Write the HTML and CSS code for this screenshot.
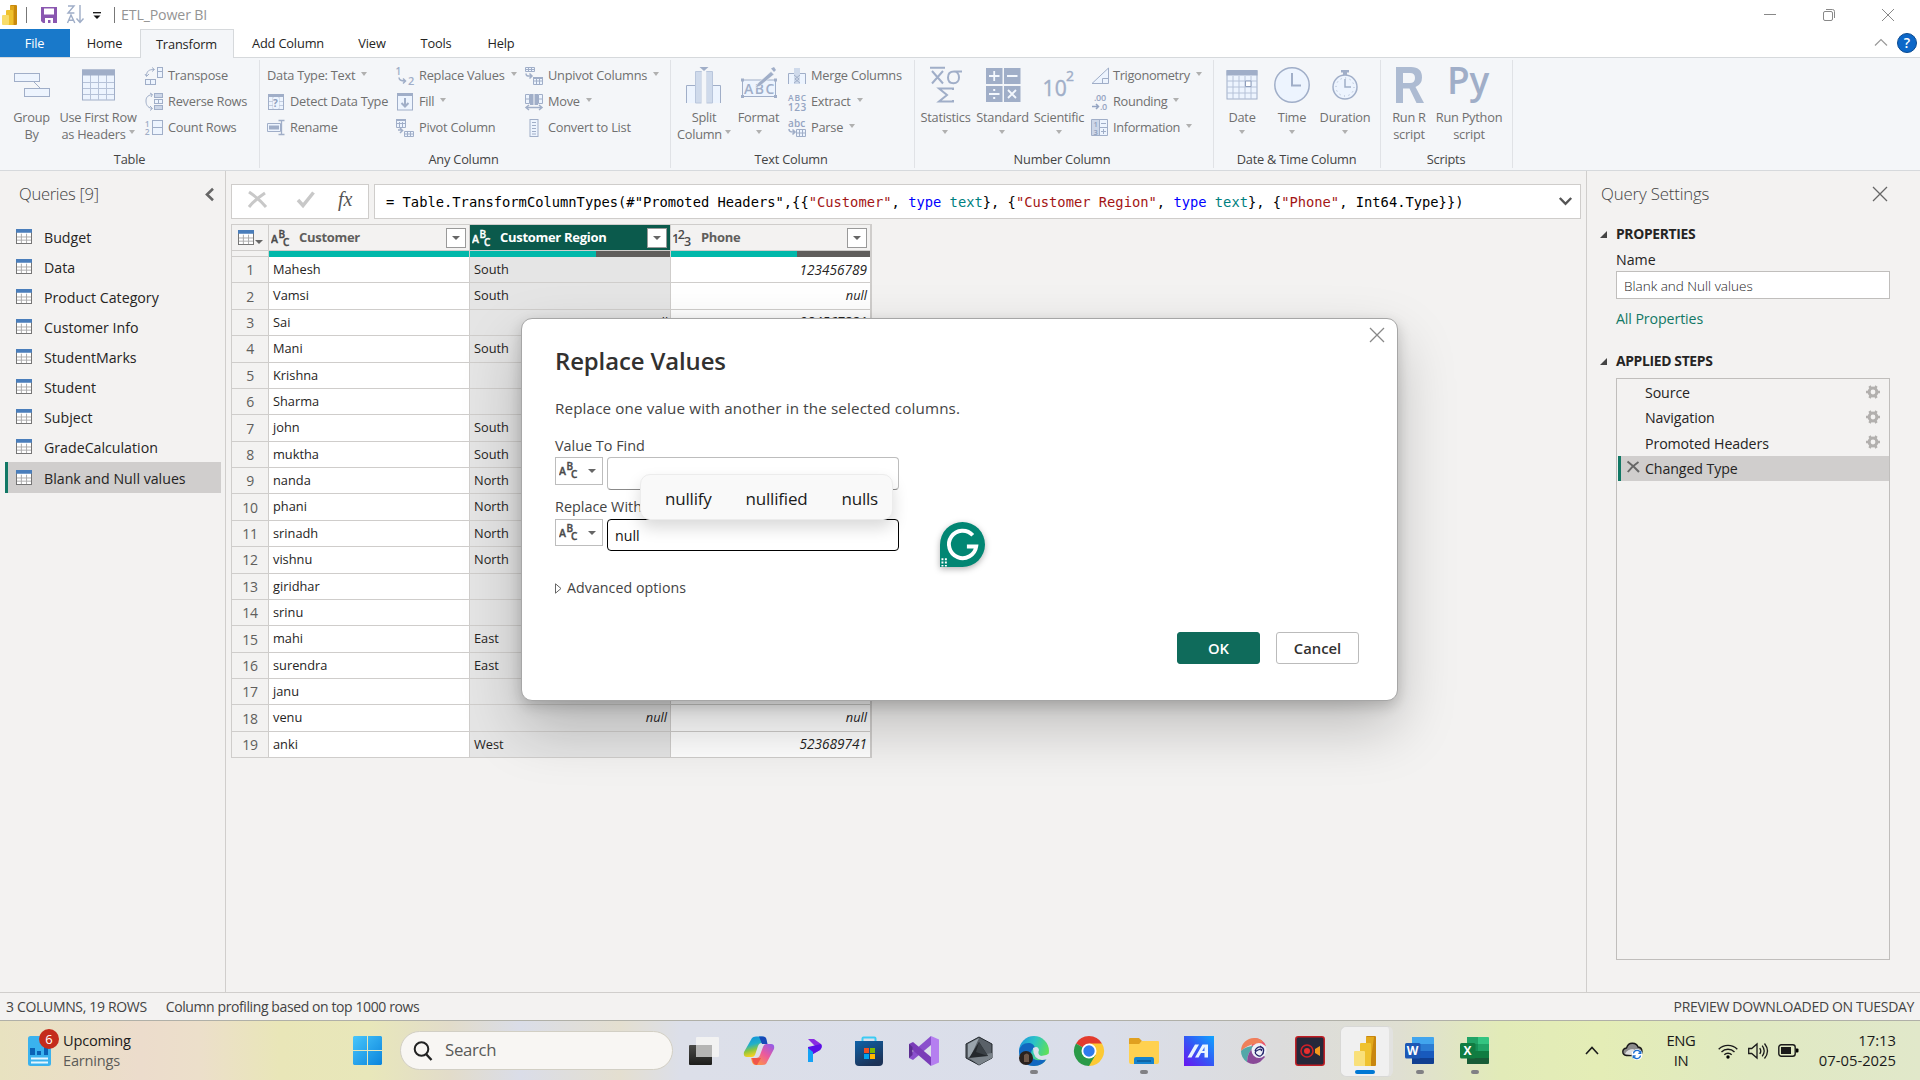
FILE: index.html
```html
<!DOCTYPE html>
<html lang="en">
<head>
<meta charset="utf-8">
<title>ETL_Power BI</title>
<link rel="stylesheet" href="styles.css">
</head>
<body>
<svg class="defs" aria-hidden="true">
  <symbol id="abc" viewBox="0 0 19 18"><g fill="currentColor" stroke="currentColor" stroke-width=".35" font-family="Open Sans, sans-serif" font-weight="600"><text x="0" y="13.6" font-size="10.5">A</text><text x="7.4" y="9.3" font-size="10">B</text><text x="12" y="17.4" font-size="10">C</text></g></symbol>
  <symbol id="n123" viewBox="0 0 19 18"><g fill="currentColor" font-family="Open Sans, sans-serif" font-weight="600"><text x="-1" y="13.8" font-size="12.5">1</text><text x="4.8" y="9.8" font-size="12.5">2</text><text x="11" y="17.3" font-size="12.5">3</text></g></symbol>
  <symbol id="tbl" viewBox="0 0 17 16"><rect x=".5" y="1" width="16" height="14.5" fill="#fff" stroke="#6e6e6e"/><path d="M1 8.5h15M1 11.9h15M5.7 5v10M11.2 5v10" stroke="#a9a9a9"/><rect width="17" height="4" fill="#4a7ebb"/></symbol>
  <symbol id="gear" viewBox="0 0 14 14"><circle cx="7" cy="7" r="3.9" fill="none" stroke="#b2b0ae" stroke-width="3"/><path d="M0 7h2.4M11.6 7H14M3.5 1l1.2 2M10.5 1L9.3 3M3.5 13l1.2-2M10.5 13l-1.2-2" stroke="#b2b0ae" stroke-width="2.6"/></symbol>
</svg>

<header class="titlebar">
  <svg class="pbi-logo" viewBox="0 0 16 20"><rect x="8" width="7" height="20" rx="1" fill="#c98a0c"/><path d="M8 1h4v19H8z" fill="#e0a51c"/><rect x="4" y="5" width="7" height="15" rx="1" fill="#efc12d"/><rect x="0" y="10" width="7" height="10" rx="1" fill="#f8dc6a"/></svg>
  <i class="vbar"></i>
  <svg class="save" viewBox="0 0 16 16"><path d="M0 0h16v16H2l-2-2z" fill="#8a57b0"/><path d="M3 1.5h10v6H3zM4 11h8v5H4z" fill="#fff"/><path d="M7 13h2.500v3H7z" fill="#8a57b0"/></svg>
  <svg class="sort" viewBox="0 0 17 19"><g fill="none" stroke="#9fadc7" stroke-width="1.400"><path d="M1 1h6L1 8h6.400M.5 18L4 10l3.800 8M2 15.300h4"/><path d="M13 0v17M9.500 13.500l3.500 4 3.500-4"/></g></svg>
  <svg class="qat" viewBox="0 0 8 8"><path d="M0 .7h8" stroke="#111" stroke-width="1.300"/><path d="M.5 3.500h7L4 7z" fill="#111"/></svg>
  <i class="vbar"></i>
  <span class="doc">ETL_Power BI</span>
  <div class="winbtns">
    <svg viewBox="0 0 12 12"><path d="M0 5.500h12"/></svg>
    <svg viewBox="0 0 12 12"><rect x=".5" y="2.500" width="9" height="9" rx="1.500"/><path d="M3 .5h6.500a2 2 0 0 1 2 2V9"/></svg>
    <svg viewBox="0 0 12 12"><path d="M0 0l12 12M12 0L0 12"/></svg>
  </div>
</header>

<nav class="tabs">
  <a class="tab file">File</a><a class="tab home">Home</a><a class="tab active">Transform</a><a class="tab addc">Add Column</a><a class="tab view">View</a><a class="tab tools">Tools</a><a class="tab help">Help</a>
  <svg class="collapse" viewBox="0 0 12 7"><path d="M0 6.500l6-6 6 6" fill="none" stroke="#999" stroke-width="1.200"/></svg>
  <span class="q">?</span>
</nav>

<section class="ribbon">
  <div class="group g-table">
    <div class="tools-row">
      <div class="big" style="width:55px"><svg viewBox="0 0 38 36"><g fill="#edf4fe" stroke="#a0aec8"><path d="M20 14l7 7" /><rect x="1.500" y="6.500" width="25" height="8"/><rect x="11.500" y="21.500" width="25" height="8"/></g></svg><span>Group<br>By</span></div>
      <div class="big" style="width:78px"><svg viewBox="0 0 38 36"><rect x="3.500" y="3" width="32" height="30" fill="#edf4fe" stroke="#a0aec8"/><path d="M4 15.500h31M4 21.500h31M4 27.500h31M11.500 8v25M19.500 8v25M27.500 8v25" stroke="#b6c2d8"/><path d="M3 2.500h33v6H3z" fill="#a0aec8"/></svg><span>Use First Row<br>as Headers <b class="dd"></b></span></div>
      <div class="stack" style="margin-left:8px">
        <div class="cmd"><svg viewBox="0 0 18 18"><g stroke="#a0aec8" fill="#edf4fe"><rect x="12.500" y=".5" width="5" height="10"/><rect x=".5" y="12.500" width="10" height="5"/><path d="M12.500 4.500h5M5.500 12.500v5"/><path d="M1.500 9C1.500 4 4 2.500 9 2.500M7 .5l2.500 2L7 4.500M0 7l1.500 2.500L4 7" fill="none"/></g></svg>Transpose</div>
        <div class="cmd"><svg viewBox="0 0 18 18"><g stroke="#a0aec8" fill="#edf4fe"><rect x="9.500" y=".5" width="8" height="4" fill="#ccd6e8"/><rect x="9.500" y="6.500" width="8" height="4"/><path d="M13.500 6.500v4"/><rect x="9.500" y="12.500" width="8" height="4" fill="#ccd6e8"/><path d="M7 1.500C2 2.500 1 5 1 8s1 6.500 6 7.500M5 0l2.500 1.500L6 4M5 13l2.500 2.500L5 17.500" fill="none"/></g></svg>Reverse Rows</div>
        <div class="cmd"><svg viewBox="0 0 18 18"><g stroke="#a0aec8" fill="#edf4fe"><rect x="7.500" y="1.500" width="10" height="14"/><path d="M7.500 8.500h10"/></g><g fill="#a0aec8" font-family="Open Sans" font-size="8.500" font-weight="600"><text x="-.2" y="7.500">1</text><text x="-.2" y="16">2</text></g></svg>Count Rows</div>
      </div>
    </div>
    <h4>Table</h4>
  </div>

  <div class="group g-any">
    <div class="tools-row">
      <div class="stack" style="width:129px">
        <div class="cmd">Data Type: Text<b class="dd"></b></div>
        <div class="cmd"><svg viewBox="0 0 18 18"><rect x="1.500" y="1.500" width="15" height="15" fill="#edf4fe" stroke="#a0aec8"/><path d="M1 1h16v3H1z" fill="#a0aec8"/><path d="M2 8.500h14M2 12.500h14M6 4v12M12 4v12" stroke="#c3cde0"/><path d="M6 5h6v10H6z" fill="#edf4fe"/><text x="6" y="14" font-size="10" font-weight="700" fill="#8e9ebc">?</text></svg>Detect Data Type</div>
        <div class="cmd"><svg viewBox="0 0 18 18"><path d="M.5 4.500h13v8H.5z" fill="#edf4fe" stroke="#a0aec8"/><path d="M2 6.500h10v4H2z" fill="#a0aec8"/><path d="M11.500 1.500h6M14.500 2v13M11.500 15.500h6" stroke="#a0aec8" stroke-width="1.300"/></svg>Rename</div>
      </div>
      <div class="stack" style="width:129px">
        <div class="cmd"><svg viewBox="0 0 18 18"><g fill="#a0aec8" font-family="Open Sans" font-weight="600"><text x="-.5" y="7.500" font-size="10">1</text><text x="12" y="17.500" font-size="11">2</text></g><path d="M3 10.500c0 3 2 3.500 6 3.500M7 11.500L9.500 14 7 16.500" fill="none" stroke="#a0aec8" stroke-width="1.500"/></svg>Replace Values<b class="dd"></b></div>
        <div class="cmd"><svg viewBox="0 0 18 18"><rect x="1.500" y="1" width="15" height="16" fill="#edf4fe" stroke="#a0aec8"/><path d="M1 0h16v3H1z" fill="#a0aec8"/><path d="M9 5v8M5.500 10L9 13.500l3.500-3.500" fill="none" stroke="#a0aec8" stroke-width="2"/></svg>Fill<b class="dd"></b></div>
        <div class="cmd"><svg viewBox="0 0 18 18"><g fill="#edf4fe" stroke="#a0aec8"><path d="M.5 1.500h9v7H.5zM.5 4.500h9M3.500 3v5M6.500 3v5"/><path d="M8.500 12.500h9v5h-9zM8.500 15h9M11.500 12.500v5M14.500 12.500v5"/><path d="M0 1h10" stroke-width="2"/><path d="M2 11h4l-2-2M4 14l3-3" fill="none" stroke-width="1.500"/></g></svg>Pivot Column</div>
      </div>
      <div class="stack">
        <div class="cmd"><svg viewBox="0 0 18 18"><g fill="#edf4fe" stroke="#a0aec8"><path d="M.5.500h9v4h-9zM3.500.500v4M6.500.500v4M.5 2.500h9"/><path d="M8.500 10.500h9v7h-9zM8.500 14h9M11.500 10.500v7M14.500 10.500v7"/><path d="M8 11h10" stroke-width="2"/><path d="M1 6.500c0 3 2 2.500 5 2.500M4.500 6.500L7 9l-2.500 2.500" fill="none" stroke-width="1.500"/></g></svg>Unpivot Columns<b class="dd"></b></div>
        <div class="cmd"><svg viewBox="0 0 18 18"><path d="M.5 1.500h4v9h-4zM13.500 1.500h4v9h-4z" fill="#edf4fe" stroke="#a0aec8"/><path d="M0 6h5M13 6h5" stroke="#a0aec8"/><path d="M5 1h3.500v11H5zM9.500 1H13v11H9.500z" fill="#a0aec8"/><path d="M2 14.500h14M4 12l-3 2.500L4 17M14 12l3 2.500L14 17" fill="none" stroke="#a0aec8" stroke-width="1.500"/></svg>Move<b class="dd"></b></div>
        <div class="cmd"><svg viewBox="0 0 18 18"><rect x="5" y=".5" width="8" height="17" fill="#edf4fe" stroke="#a0aec8"/><path d="M7 3.500h4M7 6.500h4M7 9.500h4M7 12.500h4M7 15h4" stroke="#a0aec8"/></svg>Convert to List</div>
      </div>
    </div>
    <h4>Any Column</h4>
  </div>

  <div class="group g-text">
    <div class="tools-row">
      <div class="big" style="width:60px"><svg viewBox="0 0 38 36"><path d="M1.500 36V18.500h34V36" fill="#edf4fe" stroke="#a0aec8"/><path d="M10.500 4.500h6V36h-6zM21.500 4.500h6V36h-6z" fill="#cfdaeb" stroke="#b9c6dc"/><path d="M16.500 5h5v31h-5z" fill="#f4f6f9"/><path d="M14.500 0h9L19 4z" fill="#a0aec8"/></svg><span>Split<br>Column <b class="dd"></b></span></div>
      <div class="big" style="width:49px"><svg viewBox="0 0 38 36"><rect x="2.500" y="13" width="33" height="16.500" fill="#edf4fe" stroke="#a0aec8"/><path d="M1 11.500h3v3H1zM34 11.500h3v3h-3zM1 28h3v3H1zM34 28h3v3h-3z" fill="#a0aec8"/><text x="4" y="26.500" font-family="Open Sans" font-size="14" font-weight="600" textLength="30" fill="#a0aec8">ABC</text><path d="M18 16L31 4.500l3 3L20 19l-5 2z" fill="#a0aec8" stroke="#f4f6f9" stroke-width=".6"/><path d="M31 1.500l3-1.500 2 3-2 2z" fill="#a0aec8"/></svg><span>Format<br><b class="dd"></b></span></div>
      <div class="stack" style="margin-left:5px">
        <div class="cmd"><svg viewBox="0 0 18 18"><path d="M.5 17V6.500h6V17M11.500 17V6.500h6V17" fill="#edf4fe" stroke="#a0aec8"/><path d="M6 1h6v16H6z" fill="#cfdaeb"/><path d="M6 8l5 4-5 4M12 8l-5 4 5 4" fill="none" stroke="#a0aec8"/></svg>Merge Columns</div>
        <div class="cmd"><svg viewBox="0 0 18 18"><g fill="#94a4c2" font-family="Open Sans" font-weight="600"><text x="0" y="7.500" font-size="8.500" textLength="18">ABC</text><text x="0" y="17.500" font-size="10" textLength="18">123</text></g></svg>Extract<b class="dd"></b></div>
        <div class="cmd"><svg viewBox="0 0 18 18"><text x="0" y="7.500" font-size="10" font-family="Open Sans" font-weight="600" textLength="17" fill="#94a4c2">abc</text><path d="M8.500 10.500h9v7h-9zM8.500 14h9M11.500 10.500v7M14.500 10.500v7" fill="#edf4fe" stroke="#a0aec8"/><path d="M1 10c0 3 2 3 5 3M4.500 10.500L7 13l-2.500 2.500" fill="none" stroke="#a0aec8" stroke-width="1.600"/></svg>Parse<b class="dd"></b></div>
      </div>
    </div>
    <h4>Text Column</h4>
  </div>

  <div class="group g-num">
    <div class="tools-row">
      <div class="big" style="width:57px"><svg viewBox="0 0 38 36"><g fill="none" stroke="#a0aec8" stroke-width="2"><path d="M3 .8h15M5 4l11 12.500M16 4L5 16.500" /><path d="M35 4.500H27c-4 0-6 2.500-6 6s2 5.700 5.500 5.700 5.500-2.500 5.500-5.700-1.800-6-5-6"/><path d="M26 23v-1.500H12l8 6.500-8 6.500h14V33"/></g></svg><span>Statistics<br><b class="dd"></b></span></div>
      <div class="big" style="width:57px"><svg viewBox="0 0 38 36"><path d="M2 1h16.500v16H2zM20 1h16.500v16H20zM2 19h16.500v16H2zM20 19h16.500v16H20z" fill="#a0aec8"/><path d="M5 9h10.500M10.200 4v10M23 9h10.500M5 27h10.500M24 23l8 8M32 23l-8 8" stroke="#f4f8fe" stroke-width="1.800"/><path d="M9.200 22h2v2h-2zM9.200 30h2v2h-2z" fill="#f4f8fe"/></svg><span>Standard<br><b class="dd"></b></span></div>
      <div class="big" style="width:56px"><svg viewBox="0 0 38 36"><g fill="#a0aec8" stroke="#a0aec8" stroke-width=".4" font-family="Open Sans"><text x="2.500" y="28.500" font-size="21" textLength="24">10</text><text x="26" y="14" font-size="14">2</text></g></svg><span>Scientific<br><b class="dd"></b></span></div>
      <div class="stack tight" style="margin-left:4px">
        <div class="cmd"><svg viewBox="0 0 18 18"><path d="M1 16.500L17.500 1v15.500zM11.500 16v-4.500h5.500" fill="#edf4fe" stroke="#a0aec8"/></svg>Trigonometry<b class="dd"></b></div>
        <div class="cmd"><svg viewBox="0 0 18 18"><g fill="#94a4c2" font-family="Open Sans" font-size="9" font-weight="600"><text x="3" y="7.500">.00</text><text x="9" y="17">.0</text></g><path d="M1 13.500h6M5 11l2.500 2.500L5 16" fill="none" stroke="#94a4c2" stroke-width="1.500"/></svg>Rounding<b class="dd"></b></div>
        <div class="cmd"><svg viewBox="0 0 18 18"><path d="M.5.500h16v16H.5zM8.500.500v16M.5 8.500h16" fill="#edf4fe" stroke="#a0aec8"/><path d="M1 1h7v15H1z" fill="#ccd6e8"/><g fill="#8e9ebc" font-family="Open Sans" font-size="7.500" font-weight="600"><text x="2.500" y="7.500">1</text><text x="2.500" y="15.500">3</text></g><path d="M10 4.500h5M10 12.500h5M12.500 10v5" stroke="#a0aec8"/></svg>Information<b class="dd"></b></div>
      </div>
    </div>
    <h4>Number Column</h4>
  </div>

  <div class="group g-date">
    <div class="tools-row">
      <div class="big" style="width:46px"><svg viewBox="0 0 38 36"><rect x="4" y="4" width="30" height="28" fill="#edf4fe" stroke="#a0aec8"/><path d="M10 9v23M16 9v23M22 9v23M28 9v23M4 14h30M4 20h30M4 26h30" stroke="#b6c2d8"/><path d="M3.500 3h31v5.500h-31z" fill="#a0aec8"/><path d="M22.500 14h5.500v5.500h-5.500z" fill="#fff" stroke="#8e9ebc"/></svg><span>Date<br><b class="dd"></b></span></div>
      <div class="big" style="width:54px"><svg viewBox="0 0 38 36"><circle cx="19" cy="18" r="17.200" fill="#edf4fe" stroke="#a0aec8" stroke-width="1.500"/><path d="M19 6v12.500h9" fill="none" stroke="#a0aec8" stroke-width="2"/></svg><span>Time<br><b class="dd"></b></span></div>
      <div class="big" style="width:52px"><svg viewBox="0 0 38 36"><path d="M15 3h8v2.500h-2V8h-4V5.500h-2z" fill="#a0aec8"/><circle cx="19" cy="20" r="12" fill="#edf4fe" stroke="#a0aec8" stroke-width="1.500"/><circle cx="19" cy="20" r="9" fill="none" stroke="#a0aec8" stroke-dasharray="1 3.700"/><path d="M19 12v8h6" fill="none" stroke="#a0aec8" stroke-width="1.500"/></svg><span>Duration<br><b class="dd"></b></span></div>
    </div>
    <h4>Date &amp; Time Column</h4>
  </div>

  <div class="group g-scr">
    <div class="tools-row">
      <div class="big" style="width:46px"><svg viewBox="0 0 38 36"><path d="M6 36V0h15q11 0 11 10.500 0 7-6.500 9.500L34 36h-7.500l-7-14.500H13V36zM13 6v10h7q5 0 5-5t-5-5z" fill="#adbbd2" fill-rule="evenodd"/></svg><span>Run R<br>script</span></div>
      <div class="big" style="width:74px"><svg viewBox="0 0 42 36" style="width:42px"><text x="-1" y="27" font-family="Open Sans" font-size="37" font-weight="600" textLength="42" lengthAdjust="spacingAndGlyphs" fill="#a0aec8">Py</text></svg><span>Run Python<br>script</span></div>
    </div>
    <h4>Scripts</h4>
  </div>
</section>

<main class="work">
  <aside class="queries">
    <div class="qhead"><span>Queries [9]</span><svg viewBox="0 0 9 13"><path d="M8 .8L2 6.500l6 5.700" fill="none" stroke="#666" stroke-width="2.600"/></svg></div>
    <ul>
      <li><svg><use href="#tbl"/></svg>Budget</li>
      <li><svg><use href="#tbl"/></svg>Data</li>
      <li><svg><use href="#tbl"/></svg>Product Category</li>
      <li><svg><use href="#tbl"/></svg>Customer Info</li>
      <li><svg><use href="#tbl"/></svg>StudentMarks</li>
      <li><svg><use href="#tbl"/></svg>Student</li>
      <li><svg><use href="#tbl"/></svg>Subject</li>
      <li><svg><use href="#tbl"/></svg>GradeCalculation</li>
      <li class="sel"><svg><use href="#tbl"/></svg>Blank and Null values</li>
    </ul>
  </aside>

  <section class="center">
    <div class="fbar">
      <div class="fbtns">
        <svg viewBox="0 0 20 18"><path d="M1 1c6 4 12 9 17 15M17 2C11 6 5 11 1 16" fill="none" stroke="#c8c8c8" stroke-width="3"/></svg>
        <svg viewBox="0 0 20 18"><path d="M2 9l5 5.500L17.500 1.500" fill="none" stroke="#c8c8c8" stroke-width="3.500"/></svg>
        <em>fx</em>
      </div>
      <div class="formula"><code>= Table.TransformColumnTypes(#"Promoted Headers",{{<s>"Customer"</s>, <u>type</u> <i>text</i>}, {<s>"Customer Region"</s>, <u>type</u> <i>text</i>}, {<s>"Phone"</s>, Int64.Type}})</code><svg viewBox="0 0 13 9"><path d="M.8 1l5.700 5.800L12.200 1" fill="none" stroke="#555" stroke-width="2.400"/></svg></div>
    </div>
    <div class="grid">
      <div class="hd"><div class="corner"><svg><use href="#tbl"/></svg><b class="tri"></b></div>
        <div class="ch"><svg><use href="#abc"/></svg>Customer<span class="ddb"><b class="tri"></b></span></div>
        <div class="ch on"><svg><use href="#abc"/></svg>Customer Region<span class="ddb"><b class="tri"></b></span></div>
        <div class="ch"><svg><use href="#n123"/></svg>Phone<span class="ddb"><b class="tri"></b></span></div></div>
      <div class="ql"><div></div><div><i style="width:100%"></i></div><div><i style="width:63.200%"></i></div><div><i style="width:63.200%"></i></div></div>
      <div class="r"><b>1</b><span>Mahesh</span><span>South</span><em class="num">123456789</em></div>
      <div class="r"><b>2</b><span>Vamsi</span><span>South</span><em>null</em></div>
      <div class="r"><b>3</b><span>Sai</span><em>null</em><em class="num">984567321</em></div>
      <div class="r"><b>4</b><span>Mani</span><span>South</span><em></em></div>
      <div class="r"><b>5</b><span>Krishna</span><em></em><em></em></div>
      <div class="r"><b>6</b><span>Sharma</span><em></em><em></em></div>
      <div class="r"><b>7</b><span>john</span><span>South</span><em></em></div>
      <div class="r"><b>8</b><span>muktha</span><span>South</span><em></em></div>
      <div class="r"><b>9</b><span>nanda</span><span>North</span><em></em></div>
      <div class="r"><b>10</b><span>phani</span><span>North</span><em></em></div>
      <div class="r"><b>11</b><span>srinadh</span><span>North</span><em></em></div>
      <div class="r"><b>12</b><span>vishnu</span><span>North</span><em></em></div>
      <div class="r"><b>13</b><span>giridhar</span><em></em><em></em></div>
      <div class="r"><b>14</b><span>srinu</span><em></em><em></em></div>
      <div class="r"><b>15</b><span>mahi</span><span>East</span><em></em></div>
      <div class="r"><b>16</b><span>surendra</span><span>East</span><em></em></div>
      <div class="r"><b>17</b><span>janu</span><em></em><em></em></div>
      <div class="r"><b>18</b><span>venu</span><em>null</em><em>null</em></div>
      <div class="r"><b>19</b><span>anki</span><span>West</span><em class="num">523689741</em></div>
    </div>
  </section>

  <aside class="settings">
    <div class="shead"><span>Query Settings</span><svg viewBox="0 0 14 14"><path d="M0 0l14 14M14 0L0 14" stroke="#666" stroke-width="1.300"/></svg></div>
    <h3><b class="cor"></b>PROPERTIES</h3>
    <label>Name</label>
    <div class="nameinput">Blank and Null values</div>
    <a class="all">All Properties</a>
    <h3><b class="cor"></b>APPLIED STEPS</h3>
    <div class="steps">
      <div>Source<svg><use href="#gear"/></svg></div>
      <div>Navigation<svg><use href="#gear"/></svg></div>
      <div>Promoted Headers<svg><use href="#gear"/></svg></div>
      <div class="sel"><svg class="x" viewBox="0 0 13 12"><path d="M.5.500c4 3 8 6.500 11.500 10.500M11.500 1C7.500 3.500 4 7 .8 11" fill="none" stroke="#666" stroke-width="2"/></svg>Changed Type</div>
    </div>
  </aside>
</main>

<footer class="status"><span>3 COLUMNS, 19 ROWS</span><span class="prof">Column profiling based on top 1000 rows</span><span class="prev">PREVIEW DOWNLOADED ON TUESDAY</span></footer>

<footer class="taskbar">
  <div class="widget">
    <svg viewBox="0 0 24 30"><rect width="23" height="30" rx="2.500" fill="#3ab2ee"/><path d="M2 12h5v7H2zM9 15h4v4H9zM16 11h4v8h-4z" fill="#0b62b5"/><path d="M3 22.500h17M3 26.500h17" stroke="#e4f6ff" stroke-width="1.800"/></svg>
    <span class="badge">6</span>
    <div><b>Upcoming</b><span>Earnings</span></div>
  </div>
  <svg class="start" viewBox="0 0 29 29"><defs><linearGradient id="w" x2="1" y2="1" gradientUnits="objectBoundingBox"><stop stop-color="#48c6fb"/><stop offset="1" stop-color="#0b84dc"/></linearGradient></defs><path d="M1 0h13v14H0V1zM15 0h13l1 1v13H15zM0 15h14v14H1l-1-1zM15 15h14v13l-1 1H15z" fill="url(#w)"/></svg>
  <div class="search"><svg viewBox="0 0 20 20"><circle cx="8.500" cy="8" r="6.800" fill="none" stroke="#222" stroke-width="2"/><path d="M13 13l5.500 6" stroke="#222" stroke-width="2.400"/></svg>Search</div>
  <div class="apps">
    <div><svg viewBox="0 0 30 30"><defs><linearGradient id="tv" x2="0" y2="1"><stop stop-color="#4a4a48"/><stop offset="1" stop-color="#1d1d1b"/></linearGradient></defs><rect y="9" width="23" height="20" rx="1" fill="url(#tv)"/><rect x="7" y="1" width="23" height="20" rx="1" fill="#f2f2f2"/><path d="M7 9h16v12H7z" fill="#b5b5b4"/></svg></div>
    <div><svg viewBox="0 0 30 30"><defs><linearGradient id="c1" x2=".3" y2="1"><stop stop-color="#0d8de0"/><stop offset=".45" stop-color="#22b0c8"/><stop offset=".7" stop-color="#8cc63f"/><stop offset="1" stop-color="#ffd21f"/></linearGradient><linearGradient id="c2" x1="1" x2=".2" y2="1"><stop stop-color="#8a5cf0"/><stop offset=".5" stop-color="#ec5a9c"/><stop offset="1" stop-color="#ff9a3c"/></linearGradient></defs><path d="M8 2q1-1.500 4-1.500h6q3 0 4 3L23 7h-5q-3 0-4 3l-3 9q-1 2-3 2H3q-4 0-3-5z" fill="url(#c1)"/><path d="M15 .5h4q3 0 3.500 3L23.500 8H18z" fill="#1549b8"/><path d="M22 28q-1 1-4 1h-6q-3 0-4-3L7 22h5q3 0 4-3l3-8q1-3 3-3h5q4 0 3 5z" fill="url(#c2)"/><path d="M8 22l1 4q1 3 4 3l4-7z" fill="#f0554a"/></svg></div>
    <div><svg viewBox="0 0 30 30"><path d="M9 3h6l7 5q1.500 3-1 6l-7 4v-6l2-2z" fill="#8a2be2"/><path d="M9 11v15h5v-8l7-4q3-3 1-6z" fill="#5b10e6"/><path d="M9 12l5 4v10H9z" fill="#14a2f5"/></svg></div>
    <div><svg viewBox="0 0 30 30"><defs><linearGradient id="st" x2=".5" y2="1"><stop stop-color="#0f62a8"/><stop offset="1" stop-color="#1c3358"/></linearGradient></defs><path d="M8.500 6V2.500q0-1 1-1h11q1 0 1 1V6" fill="none" stroke="#3ccbf4" stroke-width="2"/><path d="M1 5h28v21q0 4-4 4H5q-4 0-4-4z" fill="url(#st)"/><path d="M10 12h5v5h-5z" fill="#f25022"/><path d="M16 12h5v5h-5z" fill="#7fba00"/><path d="M10 18h5v5h-5z" fill="#00a4ef"/><path d="M16 18h5v5h-5z" fill="#ffb900"/></svg></div>
    <div><svg viewBox="0 0 30 30"><path d="M22 0l8 3.500v23L22 30z" fill="#b57ff0"/><path d="M22 0v9L4 24l-4-2v-3z" fill="#8a50cc"/><path d="M22 30v-9L4 6 0 8v3z" fill="#7a3db8"/><path d="M0 8l3.500 3v8L0 22z" fill="#5c2d91"/></svg></div>
    <div><svg viewBox="0 0 30 30"><path d="M15 1l13 7v14l-13 7-13-7V8z" fill="#5a6168" stroke="#23282d"/><path d="M15 2L4 8v13l2 1z" fill="#9aa4ac"/><path d="M4 21l24-4v5l-13 7z" fill="#7b838a"/><path d="M15 6l9 14-19 2z" fill="#24282c"/><path d="M15 6l9 14-12-4z" fill="#3a4045"/></svg></div>
    <div class="run"><svg viewBox="0 0 30 30"><defs><linearGradient id="e1" x2="1" y2=".4"><stop stop-color="#1b8fe0"/><stop offset=".5" stop-color="#2bc3c8"/><stop offset="1" stop-color="#5fe05a"/></linearGradient></defs><circle cx="15" cy="15" r="15" fill="url(#e1)"/><path d="M0 15q2-9 11-8 4 1 5 5-4 1-4 6 1 7 9 6 4 0 7-2-4 8-13 8Q1 30 0 15z" fill="#1267c0"/><path d="M14 12q5-3 6 2-2 4 2 6 5 0 9-3v5q-3 2-8 2-9-1-9-12z" fill="#dbdfeb"/><circle cx="7" cy="22" r="7" fill="#2a211e"/><path d="M5 19q3-3 5 0v7H5z" fill="#6e5648"/></svg></div>
    <div><svg viewBox="0 0 30 30"><path d="M15 15L2 7.500A15 15 0 0 1 28 7.500z" fill="#e33b2e"/><path d="M15 15V7.500h13A15 15 0 0 1 15 30z" fill="#fcc934"/><path d="M15 15l6.500 4L15 30A15 15 0 0 1 2 7.500z" fill="#2a9a48"/><circle cx="15" cy="15" r="7.500" fill="#fff"/><circle cx="15" cy="15" r="5.700" fill="#2f7bed"/></svg></div>
    <div class="run"><svg viewBox="0 0 30 30"><path d="M0 3q0-1 1-1h9l3 3-3 4H0z" fill="#e0a020"/><path d="M0 8h10l3-3h16q1 0 1 1v20q0 2-2 2H2q-2 0-2-2z" fill="#ffd150"/><path d="M5 28v-5q0-2 2-2h16q2 0 2 2v5z" fill="#1583cf"/><path d="M8 25h14" stroke="#0b5a99" stroke-width="1.500"/></svg></div>
    <div><svg viewBox="0 0 30 30"><defs><linearGradient id="as" x1="1" x2="0" y2="1"><stop stop-color="#0fa5ff"/><stop offset=".5" stop-color="#3358f5"/><stop offset="1" stop-color="#6a14f0"/></linearGradient></defs><path d="M0 0h30v30H0z" fill="url(#as)"/><path d="M3.500 21.500L11 8.500h4L7.500 21.500zM11 21.500l7.500-13H24v13h-3.500V17H17l-2.500 4.500z" fill="#e8f4ff"/><path d="M20.500 11v4h-2.300z" fill="#3a6af6"/></svg></div>
    <div><svg viewBox="0 0 30 30"><path d="M15 2A13 13 0 0 1 27 10l-9-2-7 7z" fill="#e8566c"/><path d="M15 2A13 13 0 0 0 2 15q6-6 14-7l8-2q-3-4-9-4z" fill="#f0805a"/><path d="M2 15q0 7 6 11 0-10 8-16-9 0-14 5z" fill="#52a8a8"/><path d="M8 26q6 4 13 0l5-5-10-11q-8 6-8 16z" fill="#8a4a98"/><circle cx="20" cy="14.500" r="7.500" fill="#eef0f8"/><path d="M16 15q2-5 6-4t2 6-6 2 1-5 3 1M21 10q5 2 3 8" fill="none" stroke="#22226a" stroke-width="1.300"/></svg></div>
    <div><svg viewBox="0 0 30 30"><rect x=".8" y=".8" width="28.400" height="28.400" rx="2.500" fill="#26283a" stroke="#c01c22" stroke-width="1.500"/><circle cx="12" cy="15" r="6" fill="none" stroke="#d02028" stroke-width="1.600"/><circle cx="12" cy="15" r="3" fill="#e83030"/><path d="M25 10v10l-5-3v-4z" fill="#f59a1c"/></svg></div>
    <div class="cur"><svg viewBox="0 0 30 30"><rect x="16" width="10" height="30" rx="1" fill="#c8860f"/><path d="M16 1h8L20 30h-4z" fill="#e2a91b"/><path d="M10 8q0-1 1-1h9q1 0 1 1v22H10z" fill="#efc22f"/><path d="M4 16q0-1 1-1h9q1 0 1 1v14H5q-1 0-1-1z" fill="#f9e07a"/></svg></div>
    <div class="run"><svg viewBox="0 0 30 30"><path d="M7 1h21q1 0 1 1v6H7z" fill="#41a5ee"/><path d="M7 8h22v7H7z" fill="#2b7cd3"/><path d="M7 15h22v7H7z" fill="#185abd"/><path d="M7 22h22v5q0 1-1 1H7z" fill="#103f91"/><rect y="7" width="15.500" height="15.500" rx="1.500" fill="#1d58b5"/><text x="1.700" y="19" font-family="Open Sans" font-weight="700" font-size="12" fill="#fff">W</text></svg></div>
    <div class="run"><svg viewBox="0 0 30 30"><path d="M7 1h11v7H7z" fill="#21a366"/><path d="M18 1h10q1 0 1 1v6H18z" fill="#33c481"/><path d="M7 8h22v7H7z" fill="#159057"/><path d="M18 8h11v7H18z" fill="#21a366"/><path d="M7 15h22v7H7z" fill="#107c41"/><path d="M7 22h22v5q0 1-1 1H7z" fill="#185c37"/><rect y="7" width="15.500" height="15.500" rx="1.500" fill="#107c41"/><text x="3.500" y="19" font-family="Open Sans" font-weight="700" font-size="12" fill="#fff">X</text></svg></div>
  </div>
  <div class="tray">
    <svg class="chev" viewBox="0 0 14 9"><path d="M1 8l6-6.500L13 8" fill="none" stroke="#1a1a1a" stroke-width="1.600"/></svg>
    <svg class="cloud" viewBox="0 0 22 18"><path d="M4.500 13.500Q.8 13 .8 9.800T4.500 6Q6 1 10.500 1.200T16 5q4 .5 4 4.500t-4 4z" fill="#8b8b8b" stroke="#1a1a1a" stroke-width="1.400"/><path d="M3 12q2-5 9-5l-3 6z" fill="#ddd"/><circle cx="15" cy="12.500" r="5.500" fill="#fff"/><path d="M11.500 11.500a3.600 3.600 0 0 1 7-.5M18.500 13.500a3.600 3.600 0 0 1-7 .5M18.800 8.800v2.500h-2.500M11.200 16.300v-2.500h2.500" fill="none" stroke="#1c6fd0" stroke-width="1.300"/></svg>
    <div class="lang">ENG<br>IN</div>
    <svg class="wifi" viewBox="0 0 20 16"><g fill="none" stroke="#1a1a1a" stroke-width="1.400"><path d="M.7 6.300a13 13 0 0 1 18.600 0M3.500 9a9.200 9.200 0 0 1 13 0M6.300 11.800a5.300 5.300 0 0 1 7.400 0"/></g><circle cx="10" cy="14" r="1.700"/></svg>
    <svg class="vol" viewBox="0 0 20 18"><g fill="none" stroke="#1a1a1a" stroke-width="1.300"><path d="M.7 6.500h3L9 2v14l-5.300-4.500h-3zM11.800 6q2 3 0 6M14.200 3.700q4 5.300 0 10.600M16.500 1.500q6 7.500 0 15"/></g></svg>
    <svg class="bat" viewBox="0 0 21 13"><rect x=".8" y=".8" width="16.400" height="11.400" rx="2.500" fill="none" stroke="#1a1a1a" stroke-width="1.400"/><rect x="3" y="3" width="10" height="7" fill="#1a1a1a"/><path d="M18 4.500h1.500q1 0 1 1v2q0 1-1 1H18z"/></svg>
    <div class="clock">17:13<br>07-05-2025</div>
  </div>
</footer>

<div class="dialog">
  <svg class="close" viewBox="0 0 14 14"><path d="M0 0l14 14M14 0L0 14" stroke="#888" stroke-width="1.300"/></svg>
  <h1>Replace Values</h1>
  <p>Replace one value with another in the selected columns.</p>
  <label>Value To Find</label>
  <div class="field"><span class="type"><svg><use href="#abc"/></svg><b class="tri"></b></span><div class="inp"></div></div>
  <label class="l2">Replace With</label>
  <div class="field f2"><span class="type"><svg><use href="#abc"/></svg><b class="tri"></b></span><div class="inp focus">null</div></div>
  <div class="adv"><svg viewBox="0 0 7 11"><path d="M.5.800v9.400L6 5.500z" fill="none" stroke="#666"/></svg>Advanced options</div>
  <div class="actions"><button class="ok">OK</button><button>Cancel</button></div>
  <div class="suggest"><span>nullify</span><span>nullified</span><span>nulls</span></div>
  <svg class="gram" viewBox="0 0 46 46"><path d="M0 46V23A23 23 0 1 1 23 46z" fill="#028673"/><path d="M33.500 13.500A14 14 0 1 0 37 25H27.500" fill="none" stroke="#fff" stroke-width="4"/><path d="M1.500 37h2v2h-2zM5 37h2v2H5zM1.500 40.500h2v2h-2zM5 40.500h2v2H5zM1.500 44h2v1.500h-2zM5 44h2v1.500H5z" fill="#fff"/></svg>
</div>
</body>
</html>
```
FILE: styles.css
```css
* { box-sizing: border-box; }
body { margin: 0; width: 1920px; height: 1080px; overflow: hidden; position: relative; display: flex; flex-direction: column; background: #f3f2f1; font: 14.2px/1.2 "Open Sans", "Noto Sans", sans-serif; color: #252423; }
svg { display: block; flex: none; overflow: visible; }
h1, h3, h4, p, ul { margin: 0; padding: 0; font-weight: 400; }
.defs { position: absolute; width: 0; height: 0; }

.titlebar { height: 29px; background: #fff; display: flex; align-items: center; flex: none; }
.pbi-logo { width: 16px; height: 20px; margin-left: 2px; }
.vbar { width: 1px; height: 16px; background: #777; margin: 0 14px 0 8px; }
.save { width: 16px; height: 16px; }
.sort { width: 17px; height: 19px; margin-left: 10px; }
.qat { width: 8px; height: 8px; margin: 3px 5px 0 9px; }
.qat + .vbar { margin-right: 6px; }
.doc { font-size: 14.2px; letter-spacing: -.15px; color: #949494; }
.winbtns { margin: 0 26px 0 auto; display: flex; gap: 47px; }
.winbtns svg { width: 12px; height: 12px; fill: none; stroke: #888; }

.tabs { height: 28px; background: #fff; display: flex; align-items: stretch; flex: none; }
.tab { display: flex; align-items: center; justify-content: center; font-size: 12.8px; letter-spacing: -.15px; padding: 1px 1px 0 0; }
.file { width: 70px; background: #1979ca; color: #fff; }
.home { width: 70px; }
.active { width: 94px; height: 29px; background: #f4f6f9; border: 1px solid #d6d9dc; border-bottom: 0; z-index: 1; }
.addc { width: 108px; padding-right: 0; }
.view { width: 61px; }
.tools { width: 67px; }
.help { width: 63px; }
.collapse { width: 12px; height: 7px; margin: 10px 10px 0 auto; }
.q { width: 20px; height: 20px; margin: 4px 3px 0 0; border-radius: 50%; border: 1px solid #0a4a90; background: #0c67c8; color: #fff; font: 600 14px/18px "Open Sans", sans-serif; text-align: center; }

.ribbon { height: 114px; flex: none; display: flex; background: #f4f6f9; border: 1px solid #d6d9dc; border-width: 1px 0; color: #707070; font-size: 12.8px; letter-spacing: -.25px; }
.group { height: 108px; margin-top: 2px; border-right: 1px solid #e0e2e6; display: flex; flex-direction: column; justify-content: space-between; }
.g-table { width: 260px; padding-left: 4px; }
.g-any { width: 411px; padding-left: 7px; }
.g-text { width: 244px; padding-left: 3px; }
.g-num { width: 299px; padding-left: 2px; }
.g-date { width: 167px; padding-left: 5px; }
.g-scr { width: 132px; padding-left: 5px; }
.group h4 { font-size: 12.8px; text-align: center; color: #444; line-height: 18px; margin-bottom: 0; padding-right: 6px; letter-spacing: -.2px; }
.g-table h4 { padding-right: 4px; }
.g-any h4 { padding-right: 10px; }
.tools-row { display: flex; }
.big { display: flex; flex-direction: column; align-items: center; text-align: center; padding-top: 7px; line-height: 17px; white-space: nowrap; flex: none; }
.big svg { width: 38px; height: 36px; margin-bottom: 6px; }
.dd { display: inline-block; border: 3.5px solid transparent; border-top: 4px solid #b0b0b0; border-bottom: 0; margin-left: 2px; vertical-align: 3px; }
.big br + .dd { vertical-align: 5px; margin-left: 0; }
.stack { display: flex; flex-direction: column; padding-top: 3px; }
.cmd { height: 26px; display: flex; align-items: center; white-space: nowrap; }
.cmd svg { width: 18px; height: 18px; margin-right: 5px; }
.cmd .dd { margin: -4px 0 0 6px; }
.tight { letter-spacing: -.35px; }
.tight .cmd svg { margin-right: 4px; }

.work { flex: 1; display: flex; min-height: 0; }
.queries { width: 226px; border-right: 1px solid #d0cecc; }
.qhead { display: flex; justify-content: space-between; align-items: center; height: 46px; padding: 0 11px 0 19px; font-size: 16.6px; font-weight: 300; color: #444; letter-spacing: -.3px; }
.qhead svg { width: 9px; height: 13px; }
.queries ul { list-style: none; padding: 5px 4px 0 5px; }
.queries li { height: 30px; display: flex; align-items: center; padding: 2px 0 0 11px; }
.queries li svg { width: 16px; height: 15px; margin: -3px 12px 0 0; }
.queries li.sel { height: 31px; background: #d0cecd; border-left: 3px solid #117865; padding-left: 8px; }

.center { flex: 1; padding: 13px 5px 0 5px; }
.fbar { display: flex; gap: 5px; height: 35px; }
.fbtns { width: 138px; background: #fff; border: 1px solid #cfcdcb; display: flex; align-items: center; padding-left: 16px; }
.fbtns svg { width: 20px; height: 18px; margin-right: 28px; margin-top: -3px; }
.fbtns em { font: italic 20px "Liberation Serif", serif; color: #555; }
.fbtns svg + em { margin: -5px 0 0 -6px; }
.formula { flex: 1; background: #fff; border: 1px solid #cfcdcb; display: flex; align-items: center; justify-content: space-between; padding: 0 8px 0 11px; color: #000; }
.formula svg { width: 13px; height: 9px; }
code { font: 13.78px "DejaVu Sans Mono", monospace; white-space: pre; }
code s, code u, code i { text-decoration: none; font-style: normal; }
code s { color: #a31515; }
code u { color: #00f; }
code i { color: #008080; }

.grid { width: 641px; margin-top: 5px; border: 1px solid #cfcdcb; border-bottom: 0; }
.hd, .ql, .r { display: grid; grid-template-columns: 37px 201px 201px 200px; }
.hd { height: 26px; }
.hd > div, .ql > div { border-right: 1px solid #cfcdcb; border-bottom: 1px solid #cfcdcb; }
.corner { display: flex; align-items: center; padding-left: 6px; }
.corner svg { width: 16px; height: 15px; }
.tri { border: 4px solid transparent; border-top: 4.5px solid #666; border-bottom: 0; }
.corner .tri { margin: 9px 0 0 1px; }
.ch { display: flex; align-items: center; padding: 1px 3px 0 2px; font-weight: 700; font-size: 13px; letter-spacing: -.3px; color: #605e5c; }
.ch svg { width: 19px; height: 18px; margin: -1px 9px 0 0; color: #4a4a4a; }
.ch.on { background: #0b5a4c; color: #fff; }
.ch.on svg { color: #fff; }
.ddb { width: 20px; height: 20px; margin-left: auto; background: #fff; border: 1px solid #999; display: flex; align-items: center; justify-content: center; }
.ql { height: 6px; }
.ql > div { border-bottom: 0; display: flex; background: #605e5c; }
.ql > div:first-child { background: #f3f2f1; border-bottom: 1px solid #cfcdcb; }
.ql i { background: #01b8aa; }
.r { height: 26.39px; font-size: 12.8px; background: #fff; }
.r > * { border-right: 1px solid #cfcdcb; border-bottom: 1px solid #cfcdcb; padding: 0 4px; display: flex; align-items: center; }
.r b { font-weight: 400; font-size: 14px; justify-content: center; color: #605e5c; background: #f3f2f1; letter-spacing: -.3px; padding-top: 2px; }
.r em { justify-content: flex-end; padding-right: 3px; }
.r .num { font-size: 13.6px; }
.r > :nth-child(3) { background: #e5e5e5; }

.settings { width: 334px; border-left: 1px solid #d0cecc; padding: 0 30px 0 14px; }
.shead { height: 46px; display: flex; justify-content: space-between; align-items: center; font-size: 16.8px; font-weight: 300; letter-spacing: -.15px; color: #444; padding-right: 3px; }
.shead svg { width: 14px; height: 14px; }
.settings h3 { display: flex; align-items: center; font-size: 13.9px; font-weight: 700; letter-spacing: -.35px; height: 36px; }
.settings h3:first-of-type { margin-top: -1px; }
.cor { border-left: 7px solid transparent; border-bottom: 7px solid #444; margin: 0 9px 0 -1px; }
.settings label { display: block; margin: -2px 0 0 15px; height: 20px; line-height: 20px; }
.nameinput { margin: 1px 0 0 15px; height: 28px; border: 1px solid #c0bebc; background: #fff; padding: 0 7px; line-height: 29px; font-size: 13.5px; font-weight: 300; }
.all { display: block; margin: 10px 0 14px 15px; height: 20px; line-height: 20px; color: #117865; letter-spacing: -.1px; }
.steps { margin: -1px 0 0 15px; height: 582px; border: 1px solid #c0bebc; padding: 1px 0 0 1px; font-size: 14.2px; letter-spacing: -.1px; }
.steps > div { height: 25.3px; display: flex; align-items: center; padding: 0 9px 0 27px; }
.steps svg { width: 14px; height: 14px; margin: -2px 0 0 auto; }
.steps .sel { background: #d0cecd; border-left: 3px solid #117865; padding-left: 6px; }
.steps .x { width: 13px; height: 12px; margin: -3px 5px 0 0; }

.status { height: 28px; flex: none; border-top: 1px solid #d0cecc; display: flex; align-items: center; padding: 1px 6px 0 6px; font-size: 14px; letter-spacing: -.33px; color: #444; }
.prof { margin-left: 19px; letter-spacing: -.4px; }
.prev { margin-left: auto; }

.taskbar { height: 60px; flex: none; border-top: 1px solid #b0b0a8; display: flex; align-items: center; position: relative; background: linear-gradient(90deg, #e8e2c0 0, #ecdccc 140px, #ecdfca 200px, #e9e6b8 280px, #e8e7ba 370px, #e2dcca 450px, #dadde8 520px, #e4dfd0 620px, #dcdfe9 680px, #dadeea 1100px, #dcdcdc 1280px, #dfdfd2 1400px, #e2ebb8 1500px, #e4edb6 1600px, #e0e9c2 1750px, #e1e8ca 1920px); }
.widget { width: 353px; display: flex; align-items: center; padding-left: 28px; position: relative; line-height: 20px; }
.widget > svg { width: 24px; height: 30px; }
.badge { position: absolute; left: 39px; top: -3px; width: 20px; height: 20px; border-radius: 50%; background: #c42b1c; color: #fff; font-size: 13px; text-align: center; line-height: 20px; }
.widget div { margin: -2px 0 0 11px; display: flex; flex-direction: column; font-size: 14.6px; letter-spacing: -.2px; color: #1b1b1b; }
.widget div b { font-weight: 400; }
.widget div span { color: #5c5c58; }
.start { width: 29px; height: 29px; margin-right: 18px; }
.search { width: 273px; height: 39px; border-radius: 20px; background: #f8f6f3; border: 1px solid #d2cfc4; display: flex; align-items: center; padding-left: 12px; font-size: 16.8px; letter-spacing: -.3px; color: #5a5a58; }
.search svg { width: 20px; height: 20px; margin-right: 12px; }
.apps { display: flex; margin-left: 3px; height: 59px; }
.apps div { width: 55.1px; position: relative; display: flex; align-items: center; justify-content: center; }
.apps svg { width: 30px; height: 30px; position: relative; }
.run::after, .cur::after { content: ""; position: absolute; bottom: 6px; width: 8px; height: 4px; border-radius: 2px; background: #808084; }
.cur::before { content: ""; position: absolute; left: 3px; top: 5px; width: 48px; height: 49px; border-radius: 6px; background: #f0f0f0; border: 1px solid #d8d8d6; border-right: 4px solid #e2e2e0; }
.cur::after { width: 20px; background: #0078d4; }
.tray { display: flex; align-items: center; margin: 0 24px 0 auto; color: #1a1a1a; line-height: 20px; font-size: 14.8px; }
.chev { width: 14px; height: 9px; margin-right: 23px; }
.cloud { width: 22px; height: 18px; }
.lang { width: 74px; text-align: center; letter-spacing: -.35px; margin-top: -1px; }
.wifi { width: 20px; height: 16px; }
.vol { width: 20px; height: 18px; margin: 0 10px; }
.bat { width: 21px; height: 13px; }
.clock { width: 97px; text-align: right; letter-spacing: 0; margin-top: -1px; }

.dialog { position: absolute; left: 521px; top: 318px; width: 877px; height: 383px; background: #fff; border: 1px solid #a6a6a6; border-radius: 11px; box-shadow: 0 26px 58px rgba(0,0,0,.22), 0 5px 14px rgba(0,0,0,.18); padding: 24px 38px 0 33px; color: #444; }
.close { position: absolute; right: 13px; top: 9px; width: 14px; height: 14px; }
.dialog h1 { font-size: 23.9px; font-weight: 600; letter-spacing: -.1px; line-height: 36px; color: #323130; }
.dialog p { font-size: 15.2px; letter-spacing: .14px; line-height: 22px; margin-top: 18px; }
.dialog label { display: block; font-size: 14.4px; letter-spacing: 0; line-height: 20px; margin-top: 17px; }
.field { display: flex; gap: 4px; margin-top: 1px; height: 33px; }
.type { width: 48px; height: 28px; border: 1px solid #bdbdbd; display: flex; align-items: center; padding-left: 3px; color: #4a4a4a; }
.type svg { width: 19px; height: 18px; margin: -2px 10px 0 0; }
.inp { width: 292px; border: 1px solid #bdbdbd; border-bottom-color: #8a8a8a; border-radius: 4px; padding: 7px 7px; color: #111; }
.dialog .l2 { margin-top: 7px; }
.f2 { margin-top: 2px; height: 32px; }
.f2 .type { height: 27px; }
.focus { border: 1px solid #000; }
.adv { display: flex; align-items: center; gap: 5px; margin-top: 27px; height: 20px; letter-spacing: .05px; }
.adv svg { width: 7px; height: 11px; }
.actions { display: flex; justify-content: flex-end; gap: 16px; margin-top: 34px; }
button { width: 83px; height: 32px; border: 1px solid #bbb; border-radius: 3px; background: #fff; font: 600 14.8px "Open Sans", sans-serif; color: #323130; padding: 0; }
.ok { background: #0f6b5b; border-color: #0f6b5b; color: #fff; }
.suggest { position: absolute; left: 118px; top: 155px; width: 253px; height: 46px; border-radius: 10px; background: #f9f9f9; border: 1px solid #ececec; box-shadow: 0 8px 16px rgba(0,0,0,.15); display: flex; align-items: center; justify-content: space-between; padding: 5px 14px 0 24px; font-size: 17px; color: #1b1b1b; letter-spacing: -.2px; }
.gram { position: absolute; left: 418px; top: 203px; width: 45px; height: 45px; filter: drop-shadow(0 2px 3px rgba(0,0,0,.3)); }
```
